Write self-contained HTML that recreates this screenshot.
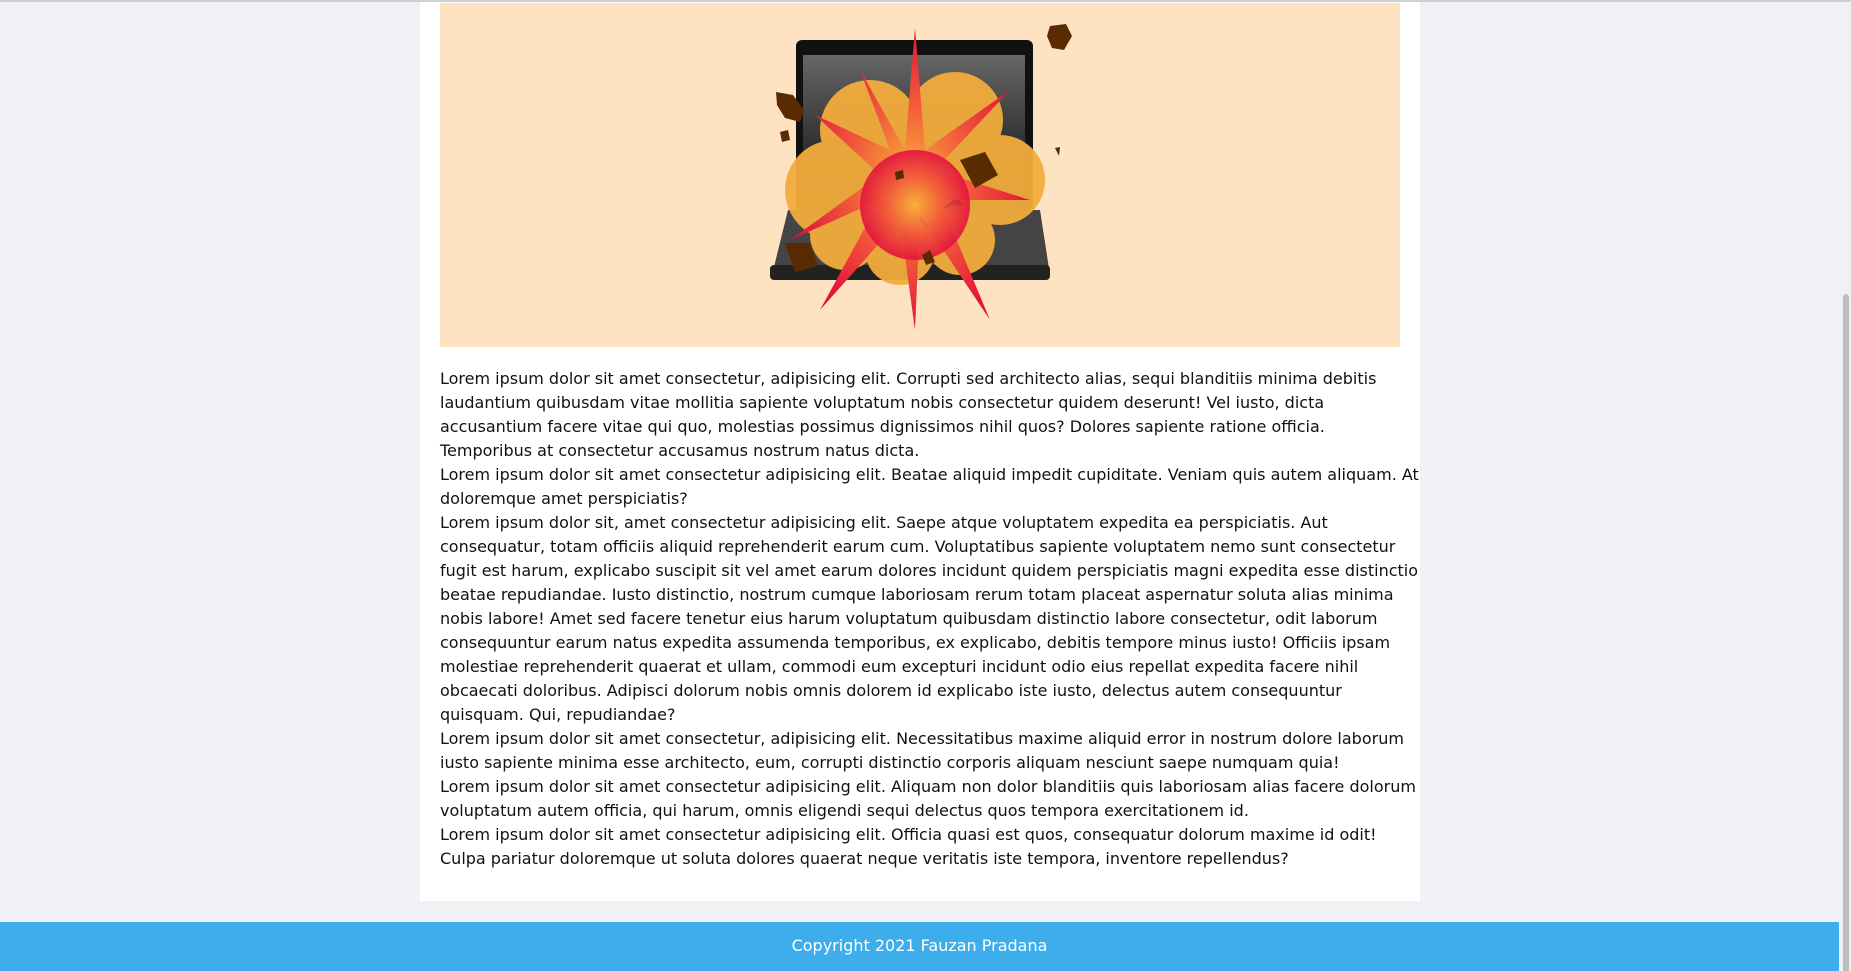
<!DOCTYPE html>
<html><head><meta charset="utf-8"><style>
html,body{margin:0;padding:0}
body{width:1851px;height:971px;background:#f0f1f5;position:relative;overflow:hidden;font-family:"DejaVu Sans","Liberation Sans",sans-serif}
.topline{position:absolute;left:0;top:0;width:1851px;height:2px;background:#cfd0d4}
.card{position:absolute;left:420px;top:2px;width:1000px;height:899px;background:#fff}
.img{position:absolute;left:440px;top:3px;width:960px;height:344px;background:#fde3c2;overflow:hidden}
.txt{position:absolute;left:440px;top:367px;font-size:16px;line-height:24px;color:#111;white-space:nowrap}
.foot{position:absolute;left:0;top:922px;width:1839px;height:49px;background:#3daeeb;color:#fff;font-size:16px;text-align:center;line-height:48px}
.foot2{position:absolute;left:1839px;top:922px;width:12px;height:49px;background:#f0f1f5}
.sb{position:absolute;left:1843px;top:294px;width:6px;height:677px;background:#bdbdbd;border-radius:3px 3px 0 0}
</style></head><body>
<div class="topline"></div>
<div class="card"></div>
<div class="img"><svg width="960" height="344" viewBox="440 3 960 344">
<defs>
<radialGradient id="ex" cx="0.5" cy="0.5" r="0.5"><stop offset="0" stop-color="#f7b23b"/><stop offset="0.5" stop-color="#f25a3a"/><stop offset="1" stop-color="#e3123c"/></radialGradient>
<linearGradient id="scr" x1="0" y1="0" x2="0" y2="1"><stop offset="0" stop-color="#666"/><stop offset="1" stop-color="#111"/></linearGradient>
</defs>
<rect x="796" y="40" width="237" height="170" rx="6" fill="#111"/>
<rect x="803" y="55" width="222" height="145" fill="url(#scr)"/>
<path d="M788 210 L1040 210 L1050 275 L772 275 Z" fill="#444"/>
<rect x="770" y="265" width="280" height="15" rx="4" fill="#222"/>
<g fill="#f2ac3c" opacity="0.95">
<circle cx="870" cy="130" r="50"/><circle cx="955" cy="120" r="48"/><circle cx="835" cy="190" r="50"/>
<circle cx="1000" cy="180" r="45"/><circle cx="915" cy="160" r="55"/><circle cx="900" cy="250" r="35"/>
<circle cx="960" cy="240" r="35"/><circle cx="845" cy="235" r="35"/>
</g>
<path d="M915 28 L925 150 L1010 90 L935 170 L1030 200 L940 200 L990 320 L920 215 L915 330 L900 220 L820 310 L880 200 L790 240 L880 175 L815 115 L890 150 L860 70 L905 150 Z" fill="url(#ex)"/>
<circle cx="915" cy="205" r="55" fill="url(#ex)" opacity="0.9"/>
<g fill="#5a2a00">
<path d="M1050 26 L1066 24 L1072 36 L1064 50 L1052 48 L1047 36 Z"/>
<path d="M776 92 L793 95 L804 110 L800 122 L785 118 L777 105 Z"/>
<path d="M960 160 L985 152 L998 175 L975 188 Z"/>
<path d="M785 243 L810 243 L818 266 L795 272 Z"/>
<path d="M780 132 L788 130 L790 140 L782 142 Z"/>
<path d="M1055 148 L1060 147 L1059 156 Z"/>
<path d="M922 255 L930 250 L935 262 L926 265 Z"/>
<path d="M895 172 L903 170 L904 178 L896 180 Z"/>
</g>
</svg></div>
<div class="txt">Lorem ipsum dolor sit amet consectetur, adipisicing elit. Corrupti sed architecto alias, sequi blanditiis minima debitis<br>laudantium quibusdam vitae mollitia sapiente voluptatum nobis consectetur quidem deserunt! Vel iusto, dicta<br>accusantium facere vitae qui quo, molestias possimus dignissimos nihil quos? Dolores sapiente ratione officia.<br>Temporibus at consectetur accusamus nostrum natus dicta.<br>Lorem ipsum dolor sit amet consectetur adipisicing elit. Beatae aliquid impedit cupiditate. Veniam quis autem aliquam. At<br>doloremque amet perspiciatis?<br>Lorem ipsum dolor sit, amet consectetur adipisicing elit. Saepe atque voluptatem expedita ea perspiciatis. Aut<br>consequatur, totam officiis aliquid reprehenderit earum cum. Voluptatibus sapiente voluptatem nemo sunt consectetur<br>fugit est harum, explicabo suscipit sit vel amet earum dolores incidunt quidem perspiciatis magni expedita esse distinctio<br>beatae repudiandae. Iusto distinctio, nostrum cumque laboriosam rerum totam placeat aspernatur soluta alias minima<br>nobis labore! Amet sed facere tenetur eius harum voluptatum quibusdam distinctio labore consectetur, odit laborum<br>consequuntur earum natus expedita assumenda temporibus, ex explicabo, debitis tempore minus iusto! Officiis ipsam<br>molestiae reprehenderit quaerat et ullam, commodi eum excepturi incidunt odio eius repellat expedita facere nihil<br>obcaecati doloribus. Adipisci dolorum nobis omnis dolorem id explicabo iste iusto, delectus autem consequuntur<br>quisquam. Qui, repudiandae?<br>Lorem ipsum dolor sit amet consectetur, adipisicing elit. Necessitatibus maxime aliquid error in nostrum dolore laborum<br>iusto sapiente minima esse architecto, eum, corrupti distinctio corporis aliquam nesciunt saepe numquam quia!<br>Lorem ipsum dolor sit amet consectetur adipisicing elit. Aliquam non dolor blanditiis quis laboriosam alias facere dolorum<br>voluptatum autem officia, qui harum, omnis eligendi sequi delectus quos tempora exercitationem id.<br>Lorem ipsum dolor sit amet consectetur adipisicing elit. Officia quasi est quos, consequatur dolorum maxime id odit!<br>Culpa pariatur doloremque ut soluta dolores quaerat neque veritatis iste tempora, inventore repellendus?</div>
<div class="foot">Copyright 2021 Fauzan Pradana</div>
<div class="foot2"></div>
<div class="sb"></div>
</body></html>
